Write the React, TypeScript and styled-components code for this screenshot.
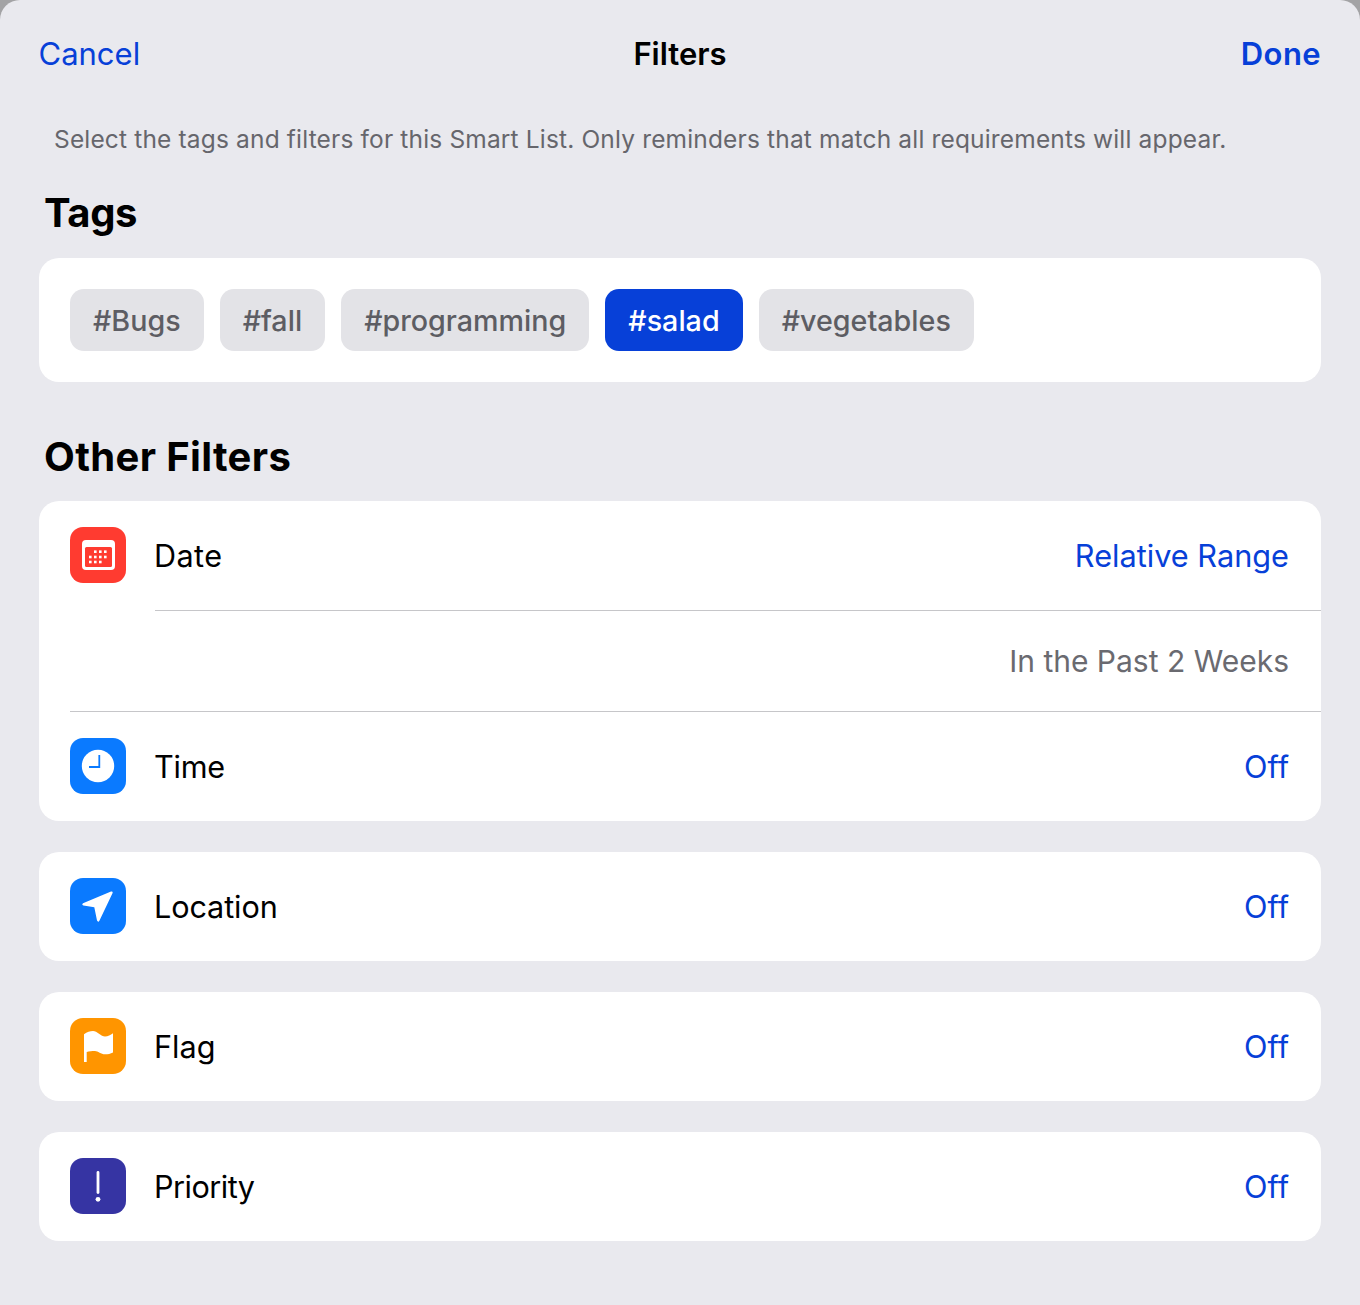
import React from "react";
import styled, { createGlobalStyle } from "styled-components";

const GlobalStyle = createGlobalStyle`
  html, body {
    margin: 0;
    padding: 0;
    background: #a3a3a5;
    font-family: Inter, "Liberation Sans", sans-serif;
    -webkit-font-smoothing: antialiased;
  }
`;

const Sheet = styled.div`
  box-sizing: border-box;
  width: 1360px;
  height: 1305px;
  padding: 0 39px;
  background: #e9e9ee;
  border-radius: 20px 20px 0 0;
  overflow: hidden;
`;

const NavBar = styled.div`
  height: 106px;
  display: grid;
  grid-template-columns: 1fr auto 1fr;
  align-items: center;
`;

const CancelButton = styled.div`
  margin-left: -0.5px;
  font-size: 31px;
  color: #0740d8;
`;

const DoneButton = styled.div`
  justify-self: end;
  font-size: 31px;
  font-weight: 600;
  letter-spacing: 0.4px;
  color: #0740d8;
`;

const NavTitle = styled.div`
  font-size: 31px;
  font-weight: 600;
  color: #000;
`;

const Description = styled.div`
  margin: 16px 0 0 15px;
  height: 34px;
  line-height: 34px;
  font-size: 24.5px;
  letter-spacing: 0.16px;
  color: #66666c;
  white-space: nowrap;
`;

const SectionTitle = styled.h2`
  margin: 0 0 0 5px;
  font-size: 40px;
  line-height: 46px;
  font-weight: 700;
  color: #000;
`;

const TagsHeading = styled(SectionTitle)`
  margin-top: 34px;
  margin-bottom: 22px;
  letter-spacing: -0.4px;
`;

const FiltersHeading = styled(SectionTitle)`
  margin-top: 52px;
  margin-bottom: 21px;
  letter-spacing: 0.35px;
`;

const Card = styled.div`
  background: #fff;
  border-radius: 20px;
  overflow: hidden;

  & + & {
    margin-top: 31px;
  }
`;

const TagList = styled.div`
  display: flex;
  gap: 16px;
  padding: 31px;
`;

const Tag = styled.div<{ $active?: boolean }>`
  box-sizing: border-box;
  height: 62px;
  padding: 0 23px;
  display: flex;
  align-items: center;
  border-radius: 14px;
  font-size: 28.7px;
  font-weight: 500;
  background: ${(p) => (p.$active ? "#0740d8" : "#e3e3e7")};
  color: ${(p) => (p.$active ? "#fff" : "#5d5d63")};
`;

const Row = styled.div`
  box-sizing: border-box;
  height: 109px;
  padding: 0 32px 0 31px;
  display: flex;
  align-items: center;
`;

const IconBox = styled.div<{ $color: string }>`
  width: 56px;
  height: 56px;
  margin-top: -1px;
  flex: none;
  border-radius: 13px;
  background: ${(p) => p.$color};
  display: flex;
  align-items: center;
  justify-content: center;
`;

const RowLabel = styled.div<{ $spacing?: number }>`
  margin-left: 28px;
  flex: 1;
  font-size: 30.6px;
  letter-spacing: ${(p) => p.$spacing ?? 0}px;
  color: #000;
`;

const RowValue = styled.div`
  font-size: 30.7px;
  color: #0740d8;
`;

const InsetDivider = styled.div<{ $inset: number }>`
  height: 1px;
  margin-left: ${(p) => p.$inset}px;
  background: #c6c6c9;
`;

const SubRow = styled.div`
  box-sizing: border-box;
  height: 100px;
  padding: 0 32px;
  display: flex;
  align-items: center;
  justify-content: flex-end;
  font-size: 30px;
  color: #6a6a70;
`;

const CalendarIcon = () => (
  <svg width="33" height="30" viewBox="0 0 33 30">
    <rect width="33" height="30" rx="4" fill="#fff" />
    <rect x="3" y="7" width="27" height="20" rx="1.5" fill="#ff3b30" />
    {[
      [13.3, 11.7], [18.3, 11.7], [23.3, 11.7],
      [8.3, 17], [13.3, 17], [18.3, 17], [23.3, 17],
      [8.3, 22], [13.3, 22], [18.3, 22],
    ].map(([x, y]) => (
      <rect key={`${x}-${y}`} x={x - 1.3} y={y - 1.3} width="2.6" height="2.6" fill="#fff" />
    ))}
  </svg>
);

const ClockIcon = () => (
  <svg width="34" height="34" viewBox="0 0 34 34">
    <circle cx="17" cy="17" r="16.2" fill="#fff" />
    <path d="M18.3 6V18H8" fill="none" stroke="#0a7aff" strokeWidth="1.8" />
  </svg>
);

const LocationIcon = () => (
  <svg width="32" height="32" viewBox="0 0 32 32">
    <path
      d="M29 1.6 L1 13.2 Q-0.6 15 1.4 15.4 L12.3 17.3 L15 30.6 Q16.2 32.6 17.4 30.8 L30.6 3 Q31 1 29 1.6 Z"
      fill="#fff"
    />
  </svg>
);

const FlagIcon = () => (
  <svg width="29" height="31" viewBox="0 0 29 31">
    <path
      d="M0 3.3 C3 1 6 0 9 0 C13 0 17 5.6 21 5.6 C24 5.6 26.5 4 29 2.3 V21.6 C26.5 23 24 23.3 21 23.3 C17 23.3 14 20 11 20 C8 20 5 20 2.7 21 V31 H0 Z"
      fill="#fff"
    />
  </svg>
);

const PriorityIcon = () => (
  <svg width="8" height="31" viewBox="0 0 8 31">
    <rect x="2.6" y="0" width="2.8" height="23" rx="1.4" fill="#fff" />
    <circle cx="4" cy="28.3" r="2.4" fill="#fff" />
  </svg>
);

const tags = ["#Bugs", "#fall", "#programming", "#salad", "#vegetables"];

const simpleFilters = [
  { label: "Location", color: "#0a7aff", icon: <LocationIcon />, spacing: -0.1 },
  { label: "Flag", color: "#ff9500", icon: <FlagIcon />, spacing: 0 },
  { label: "Priority", color: "#3634a3", icon: <PriorityIcon />, spacing: -0.5 },
];

const App = () => {
  return (
    <Sheet>
      <GlobalStyle />
      <NavBar>
        <CancelButton>Cancel</CancelButton>
        <NavTitle>Filters</NavTitle>
        <DoneButton>Done</DoneButton>
      </NavBar>
      <Description>
        Select the tags and filters for this Smart List. Only reminders that match all requirements will appear.
      </Description>

      <TagsHeading>Tags</TagsHeading>
      <Card>
        <TagList>
          {tags.map((tag) => (
            <Tag key={tag} $active={tag === "#salad"}>
              {tag}
            </Tag>
          ))}
        </TagList>
      </Card>

      <FiltersHeading>Other Filters</FiltersHeading>
      <Card>
        <Row>
          <IconBox $color="#ff3b30">
            <CalendarIcon />
          </IconBox>
          <RowLabel $spacing={0.4}>Date</RowLabel>
          <RowValue>Relative Range</RowValue>
        </Row>
        <InsetDivider $inset={116} />
        <SubRow>In the Past 2 Weeks</SubRow>
        <InsetDivider $inset={31} />
        <Row>
          <IconBox $color="#0a7aff">
            <ClockIcon />
          </IconBox>
          <RowLabel $spacing={-0.2}>Time</RowLabel>
          <RowValue>Off</RowValue>
        </Row>
      </Card>
      {simpleFilters.map((f) => (
        <Card key={f.label}>
          <Row>
            <IconBox $color={f.color}>{f.icon}</IconBox>
            <RowLabel $spacing={f.spacing}>{f.label}</RowLabel>
            <RowValue>Off</RowValue>
          </Row>
        </Card>
      ))}
    </Sheet>
  );
};

export default App;
